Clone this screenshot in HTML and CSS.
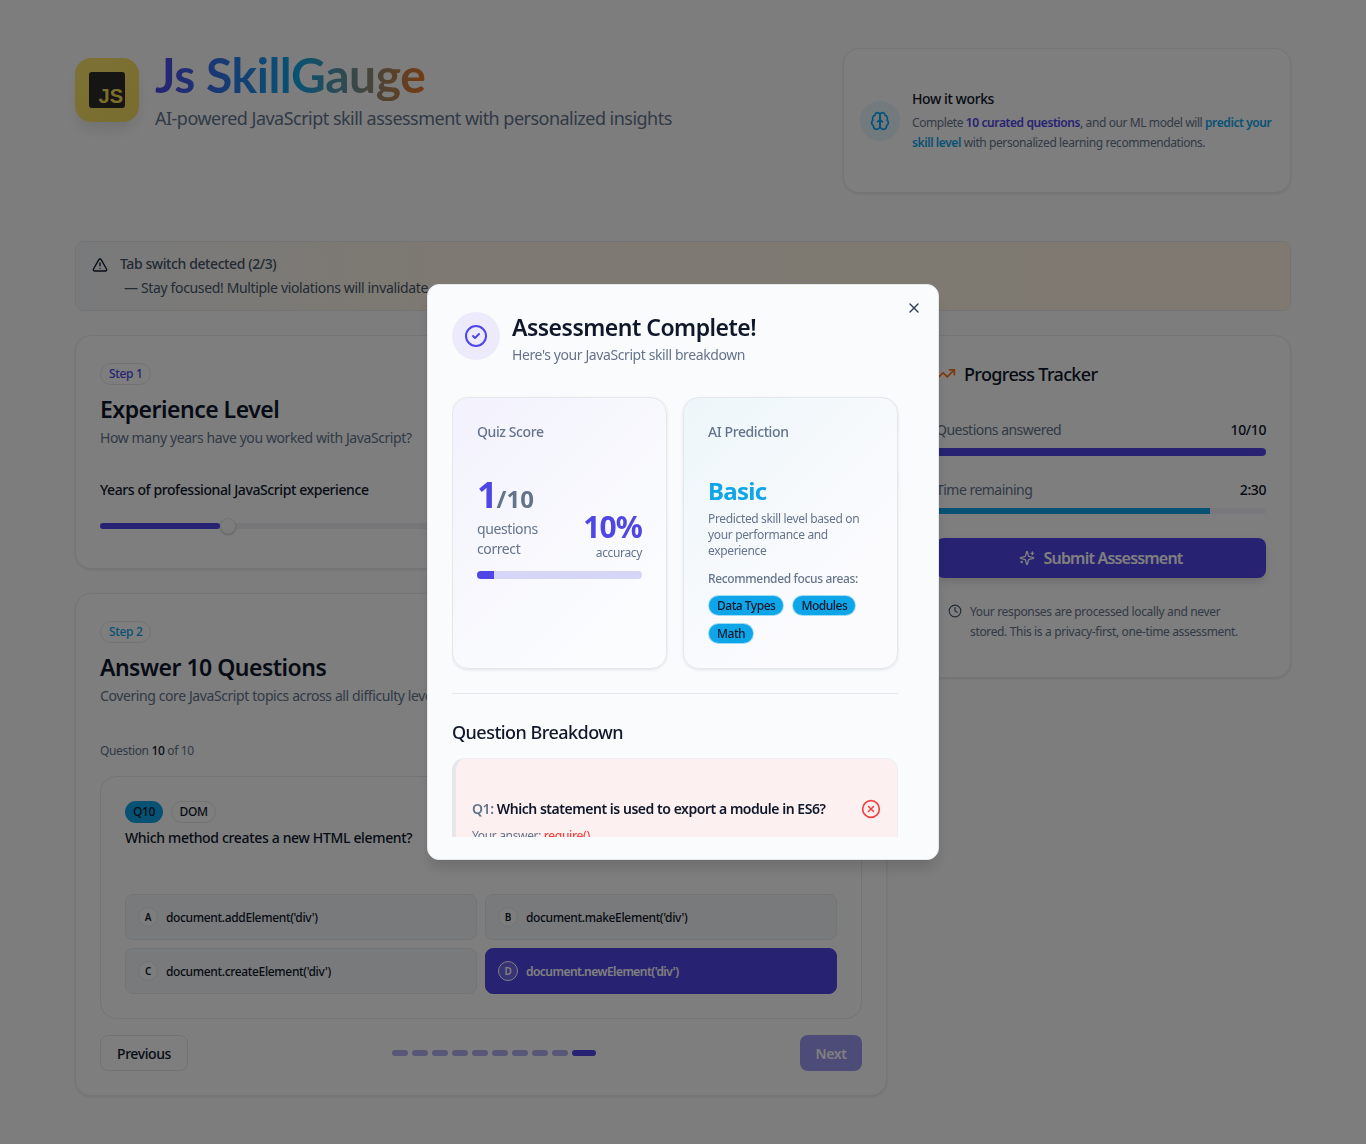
FILE: index.html
```html
<!DOCTYPE html>
<html lang="en">
<head>
<meta charset="utf-8">
<title>Js SkillGauge</title>
<link rel="stylesheet" href="styles.css">
</head>
<body>
<div class="page">
  <header class="top">
    <div class="brand">
      <div class="logo"><div class="js-box"><span>JS</span></div></div>
      <div class="brand-text">
        <h1>Js SkillGauge</h1>
        <p>AI-powered JavaScript skill assessment with personalized insights</p>
      </div>
    </div>
    <aside class="how card">
      <div class="how-icon">
        <svg class="ic" width="20" height="20" viewBox="0 0 24 24"><path d="M12 5a3 3 0 1 0-5.997.125 4 4 0 0 0-2.526 5.77 4 4 0 0 0 .556 6.588A4 4 0 1 0 12 18Z"/><path d="M12 5a3 3 0 1 1 5.997.125 4 4 0 0 1 2.526 5.77 4 4 0 0 1-.556 6.588A4 4 0 1 1 12 18Z"/><path d="M15 13a4.5 4.5 0 0 1-3-4 4.5 4.5 0 0 1-3 4"/><path d="M12 18V9"/></svg>
      </div>
      <div>
        <h3>How it works</h3>
        <p>Complete <b class="indigo">10 curated questions</b>, and our ML model will <b class="sky">predict your skill level</b> with personalized learning recommendations.</p>
      </div>
    </aside>
  </header>

  <section class="alert">
    <svg class="ic alert-ic" width="16" height="16" viewBox="0 0 24 24"><path d="m21.73 18-8-14a2 2 0 0 0-3.48 0l-8 14A2 2 0 0 0 4 21h16a2 2 0 0 0 1.73-3"/><path d="M12 9v4"/><path d="M12 17h.01"/></svg>
    <div>
      <div class="alert-title">Tab switch detected (2/3)</div>
      <div class="alert-body">— Stay focused! Multiple violations will invalidate</div>
    </div>
  </section>

  <main class="grid">
    <div class="left">
      <section class="card step-card step-one">
        <span class="step indigo">Step 1</span>
        <h2>Experience Level</h2>
        <p class="muted">How many years have you worked with JavaScript?</p>
        <div class="field-label">Years of professional JavaScript experience</div>
        <div class="slider"><div class="slider-fill"></div><div class="slider-thumb"></div></div>
      </section>

      <section class="card step-card step-two">
        <span class="step sky">Step 2</span>
        <h2>Answer 10 Questions</h2>
        <p class="muted">Covering core JavaScript topics across all difficulty levels</p>
        <div class="q-count">Question <b>10</b> of 10</div>
        <div class="q-card">
          <div class="q-tags"><span class="q-num">Q10</span><span class="q-topic">DOM</span></div>
          <div class="q-text">Which method creates a new HTML element?</div>
          <div class="options">
            <div class="option"><span class="letter">A</span>document.addElement('div')</div>
            <div class="option"><span class="letter">B</span>document.makeElement('div')</div>
            <div class="option"><span class="letter">C</span>document.createElement('div')</div>
            <div class="option selected"><span class="letter">D</span>document.newElement('div')</div>
          </div>
        </div>
        <div class="q-nav">
          <button class="btn-prev">Previous</button>
          <div class="dots"><i></i><i></i><i></i><i></i><i></i><i></i><i></i><i></i><i></i><i class="now"></i></div>
          <button class="btn-next">Next</button>
        </div>
      </section>
    </div>

    <aside class="card tracker">
      <h3 class="tracker-title">
        <svg class="ic orange" width="20" height="20" viewBox="0 0 24 24"><polyline points="22 7 13.5 15.5 8.5 10.5 2 17"/><polyline points="16 7 22 7 22 13"/></svg>
        Progress Tracker
      </h3>
      <div class="metric metric-q"><span>Questions answered</span><b>10/10</b></div>
      <div class="bar bar-q"><div class="bar-fill-q"></div></div>
      <div class="metric metric-t"><span>Time remaining</span><b>2:30</b></div>
      <div class="bar bar-t"><div class="bar-fill-t"></div></div>
      <button class="submit">
        <svg class="ic" width="16" height="16" viewBox="0 0 24 24"><path d="M9.937 15.5A2 2 0 0 0 8.5 14.063l-6.135-1.582a.5.5 0 0 1 0-.962L8.5 9.936A2 2 0 0 0 9.937 8.5l1.582-6.135a.5.5 0 0 1 .963 0L14.063 8.5A2 2 0 0 0 15.5 9.937l6.135 1.581a.5.5 0 0 1 0 .964L15.5 14.063a2 2 0 0 0-1.437 1.437l-1.582 6.135a.5.5 0 0 1-.963 0z"/><path d="M20 3v4"/><path d="M22 5h-4"/><path d="M4 17v2"/><path d="M5 18H3"/></svg>
        Submit Assessment
      </button>
      <div class="note">
        <svg class="ic" width="14" height="14" viewBox="0 0 24 24"><circle cx="12" cy="12" r="10"/><polyline points="12 6 12 12 16 14"/></svg>
        <p>Your responses are processed locally and never stored. This is a privacy-first, one-time assessment.</p>
      </div>
    </aside>
  </main>
</div>

<div class="overlay">
  <div class="modal">
    <button class="close" aria-label="Close">
      <svg class="ic" width="16" height="16" viewBox="0 0 24 24"><path d="M18 6 6 18"/><path d="m6 6 12 12"/></svg>
    </button>
    <div class="modal-scroll">
      <div class="m-head">
        <div class="m-icon">
          <svg class="ic" width="24" height="24" viewBox="0 0 24 24"><circle cx="12" cy="12" r="10"/><path d="m9 12 2 2 4-4"/></svg>
        </div>
        <div>
          <h2>Assessment Complete!</h2>
          <p>Here's your JavaScript skill breakdown</p>
        </div>
      </div>
      <div class="m-cards">
        <div class="m-card score-card">
          <div class="m-label">Quiz Score</div>
          <div class="score-row">
            <div>
              <div class="score"><span class="score-n">1</span><span class="score-d">/10</span></div>
              <div class="score-cap">questions correct</div>
            </div>
            <div class="acc">
              <div class="acc-n">10%</div>
              <div class="acc-cap">accuracy</div>
            </div>
          </div>
          <div class="score-bar"><div class="score-fill"></div></div>
        </div>
        <div class="m-card ai-card">
          <div class="m-label">AI Prediction</div>
          <div class="level">Basic</div>
          <p class="level-note">Predicted skill level based on your performance and experience</p>
          <div class="focus">Recommended focus areas:</div>
          <div class="chips"><span>Data Types</span><span>Modules</span><span>Math</span></div>
        </div>
      </div>
      <hr class="m-rule">
      <h3 class="m-sub">Question Breakdown</h3>
      <div class="review">
        <div class="review-row">
          <div class="review-q"><span>Q1:</span> Which statement is used to export a module in ES6?</div>
          <svg class="ic red" width="20" height="20" viewBox="0 0 24 24"><circle cx="12" cy="12" r="10"/><path d="m15 9-6 6"/><path d="m9 9 6 6"/></svg>
        </div>
        <div class="review-a">Your answer: <b>require()</b></div>
      </div>
    </div>
  </div>
</div>
</body>
</html>
```

FILE: styles.css
```css
* { box-sizing: border-box; letter-spacing: -0.029em; }
html, body { margin: 0; padding: 0; }
body {
  background: #fbfbfd;
  color: #0f172a;
  font-family: "Noto Sans", "Open Sans", "Liberation Sans", sans-serif;
  font-size: 14px;
}
h1, h2, h3, p { margin: 0; }
b { font-weight: 600; }
button { font-family: inherit; }
.ic { fill: none; stroke: currentColor; stroke-width: 2; stroke-linecap: round; stroke-linejoin: round; flex: none; display: block; }
.indigo { color: #4f46e5; }
.sky { color: #0ea5e9; }
.orange { color: #f97316; }
.red { color: #ef4444; }

.page { width: 1216px; margin: 0 auto; padding: 48px 0; height: 1144px; }
.card {
  background: #fcfcfd;
  border: 1px solid #eaebef;
  border-radius: 16px;
  box-shadow: 0 1px 3px rgba(0,0,0,.1);
}

.top { display: flex; justify-content: space-between; align-items: flex-start; height: 145px; margin-bottom: 48px; }
.brand { display: flex; gap: 16px; padding-top: 10px; }
.logo {
  width: 64px; height: 64px; border-radius: 16px;
  background: linear-gradient(135deg, #f9e36a, #f4d85e);
  box-shadow: 0 10px 15px -3px rgba(0,0,0,.1);
  display: flex; align-items: center; justify-content: center;
}
.js-box { width: 36px; height: 36px; background: #2b2b26; border-radius: 3px; display: flex; align-items: flex-end; justify-content: flex-end; padding: 0 2px 1px 0; }
.js-box span { color: #f7df5a; font-family: "Liberation Sans", sans-serif; font-weight: 700; font-size: 20px; line-height: 22px; letter-spacing: 0; }
.brand-text { margin-top: -9px; }
h1 {
  font-family: "Lato", "Noto Sans", sans-serif;
  font-size: 48px; line-height: 52px; font-weight: 700; letter-spacing: -0.01em;
  background: linear-gradient(90deg, #4f46e5 0%, #0ea5e9 50%, #f97316 100%);
  background-clip: text; -webkit-background-clip: text; color: transparent;
  width: 280px; white-space: nowrap;
}
.brand-text p { font-size: 18px; line-height: 28px; color: #64748b; margin-top: 3px; }

.how { width: 448px; height: 145px; display: flex; gap: 12px; align-items: center; padding: 0 12px 0 16px; }
.how-icon { width: 40px; height: 40px; border-radius: 50%; background: #e7f4fb; color: #0ea5e9; display: flex; align-items: center; justify-content: center; flex: none; }
.how h3 { font-size: 14px; font-weight: 500; line-height: 20px; margin-bottom: 4px; }
.how p, .how b { font-size: 12px; line-height: 20px; color: #64748b; letter-spacing: -0.034em; }
.how b.indigo { color: #4f46e5; }
.how b.sky { color: #0ea5e9; }

.alert {
  height: 70px; margin-bottom: 24px; padding: 11px 16px;
  display: flex; gap: 12px;
  background: linear-gradient(90deg, #f3f5f8, #fcf3e4 30%, #fef3e2);
  border: 1px solid #e8e8ea; border-radius: 8px;
}
.alert-ic { margin-top: 4px; }
.alert-title { font-weight: 500; color: #475569; line-height: 22px; }
.alert-body { color: #475569; line-height: 22px; margin-top: 2px; padding-left: 4px; letter-spacing: -0.025em; }

.grid { display: grid; grid-template-columns: 812px 380px; gap: 24px; align-items: start; }
.left { display: flex; flex-direction: column; gap: 24px; }
.step-card { padding: 24px; }
.step-one { height: 234px; }
.step-two { height: 503px; }
.step {
  display: inline-block; font-size: 12px; line-height: 20px; font-weight: 500;
  padding: 0 8px; border: 1px solid #e6e7eb; border-radius: 999px; margin-top: 3px;
}
h2 { font-size: 23px; line-height: 32px; font-weight: 600; letter-spacing: -0.022em; }
.step-card h2 { margin-top: 8px; }
.muted { color: #64748b; line-height: 20px; margin-top: 3px; }
.field-label { font-weight: 500; line-height: 20px; margin-top: 32px; }
.slider { position: relative; height: 6px; background: #eeeff3; border-radius: 3px; margin-top: 23px; }
.slider-fill { width: 120px; height: 6px; background: #4f46e5; border-radius: 3px; }
.slider-thumb { position: absolute; left: 120px; top: -5px; width: 16px; height: 16px; border-radius: 50%; background: #fbfbfb; border: 1px solid #e5e7eb; box-shadow: 0 1px 2px rgba(0,0,0,.2); }

.step-two .q-count { font-size: 12px; line-height: 16px; color: #64748b; margin-top: 37px; }
.q-count b { color: #0f172a; font-weight: 500; }
.q-card { height: 243px; margin-top: 17px; padding: 24px; border: 1px solid #e8e9ed; border-radius: 16px; background: #fcfcfd; }
.q-tags { display: flex; gap: 8px; }
.q-num { background: #0ea5e9; color: #0f172a; font-size: 12px; font-weight: 500; line-height: 20px; padding: 0 7px; border-radius: 999px; border: 1px solid transparent; }
.q-topic { color: #0f172a; font-size: 12px; font-weight: 500; line-height: 20px; padding: 0 7.5px; border-radius: 999px; border: 1px solid #e6e7eb; }
.q-text { font-weight: 500; line-height: 20px; margin-top: 5px; letter-spacing: -0.024em; }
.options { display: grid; grid-template-columns: 352px 352px; gap: 8px; margin-top: 46px; }
.option {
  height: 46px; display: flex; align-items: center; gap: 8px;
  font-size: 12px; font-weight: 500; padding: 0 12px;
  background: #f3f5f6; border: 1px solid #e6e8ec; border-radius: 8px;
}
.letter { width: 20px; height: 20px; border: 1px solid #e6e7eb; border-radius: 50%; background: #fbfbfc; display: flex; align-items: center; justify-content: center; font-size: 10px; font-weight: 600; flex: none; }
.selected { background: #4f46e5; border-color: #4f46e5; color: #fff; font-weight: 600; letter-spacing: -0.045em; }
.selected .letter { background: #6e67e9; border-color: #fff; color: #fff; }

.q-nav { display: flex; justify-content: space-between; align-items: center; margin-top: 16px; }
.btn-prev { width: 88px; height: 36px; font-size: 14px; font-weight: 500; color: #0f172a; background: #fcfcfd; border: 1px solid #e6e7eb; border-radius: 8px; }
.btn-next { width: 62px; height: 36px; font-size: 14px; font-weight: 600; color: #fff; background: #9b97ee; border: 0; border-radius: 8px; }
.dots { display: flex; gap: 4px; }
.dots i { width: 16px; height: 6px; border-radius: 3px; background: #b1aef0; }
.dots .now { width: 24px; background: #4f46e5; }

.tracker { height: 343px; padding: 24px; }
.tracker-title { display: flex; align-items: center; gap: 8px; font-size: 18px; font-weight: 500; line-height: 28px; margin-top: 0; letter-spacing: -0.036em; }
.metric { display: flex; justify-content: space-between; line-height: 20px; color: #64748b; }
.metric span { letter-spacing: -0.037em; }
.metric b { color: #0f172a; font-weight: 500; }
.metric-q { margin-top: 32px; }
.metric-t { margin-top: 24px; }
.bar { border-radius: 4px; background: #eceafb; overflow: hidden; margin-top: 8px; }
.bar-q { height: 8px; }
.bar-t { height: 6px; background: #f2f1fa; }
.bar-fill-q { height: 8px; width: 100%; background: #4f46e5; }
.bar-fill-t { height: 6px; width: 83%; background: #0ea5e9; }
.submit {
  width: 100%; height: 40px; margin-top: 24px; border: 0; border-radius: 8px;
  background: #4f46e5; color: #fff; font-size: 16px; font-weight: 600;
  display: flex; align-items: center; justify-content: center; gap: 8px;
  box-shadow: 0 4px 8px rgba(0,0,0,.12);
  letter-spacing: -0.05em;
}
.note { display: flex; gap: 8px; margin-top: 24px; padding: 0 12px; font-size: 12px; line-height: 20px; color: #64748b; }
.note .ic { margin-top: 2px; color: #475569; }

.overlay { position: fixed; inset: 0; background: rgba(0,0,0,.5); display: flex; align-items: center; justify-content: center; }
.modal {
  position: relative; width: 512px; height: 576px;
  padding: 24px 24px 22px;
  background: #fafbfd; border: 1px solid #e5e7eb; border-radius: 12px;
  box-shadow: 0 10px 15px -3px rgba(0,0,0,.15);
}
.close { position: absolute; top: 15px; right: 16px; width: 16px; height: 16px; padding: 0; border: 0; background: none; color: #334155; }
.modal-scroll { height: 100%; overflow: hidden; padding: 3px 16px 0 0; }
.m-head { display: flex; gap: 12px; align-items: flex-start; }
.m-icon { width: 48px; height: 48px; border-radius: 50%; background: #eceafb; color: #4f46e5; display: flex; align-items: center; justify-content: center; flex: none; }
.m-head h2 { margin-top: -1px; }
.m-head p { color: #64748b; line-height: 20px; margin-top: 2px; }
.m-cards { display: grid; grid-template-columns: 215px 215px; gap: 16px; margin-top: 32px; }
.m-card { padding: 24px; border: 1px solid #e5e7eb; border-radius: 16px; box-shadow: 0 1px 3px rgba(0,0,0,.1); height: 272px; }
.score-card { background: linear-gradient(135deg, #f3f2fd, #fbfcfe 80%); }
.ai-card { background: linear-gradient(135deg, #edf6fa, #fbfbfe 70%); }
.m-label { font-weight: 500; color: #64748b; line-height: 20px; }
.score-row { display: flex; justify-content: space-between; align-items: flex-end; margin-top: 36px; }
.score { line-height: 33px; white-space: nowrap; }
.score-n { font-size: 36px; font-weight: 700; color: #4f46e5; }
.score-d { font-size: 24px; font-weight: 700; color: #64748b; letter-spacing: 0; }
.score-cap { color: #64748b; line-height: 20px; width: 80px; }
.acc { text-align: right; margin-bottom: -2px; }
.acc-n { font-size: 30px; line-height: 36px; font-weight: 700; color: #4f46e5; }
.acc-cap { font-size: 12px; line-height: 16px; color: #64748b; }
.score-bar { height: 8px; border-radius: 4px; background: #d6d4f7; overflow: hidden; margin-top: 12px; }
.score-fill { width: 10%; height: 8px; background: #4f46e5; }
.level { font-size: 24px; line-height: 32px; font-weight: 700; color: #0ea5e9; margin-top: 33px; }
.level-note { font-size: 12px; line-height: 16px; color: #64748b; margin-top: 4px; }
.focus { font-size: 12px; line-height: 16px; font-weight: 500; color: #64748b; margin-top: 12px; }
.chips { display: flex; flex-wrap: wrap; gap: 7px 8px; margin-top: 8px; }
.chips span { background: #0ea5e9; color: #0f172a; font-size: 12px; font-weight: 500; line-height: 19px; padding: 0 8px; border: 1px solid rgba(255,255,255,.6); border-radius: 999px; letter-spacing: -0.04em; }
.m-rule { border: 0; border-top: 1px solid #e5e7eb; margin: 24px 0 0; }
.m-sub { font-size: 18px; font-weight: 500; line-height: 28px; margin-top: 24px; }
.review { margin-top: 12px; height: 120px; background: #fcf0f0; border: 1px solid #eeeef2; border-left: 4px solid #e5e7eb; border-radius: 12px; padding: 40px 16px 0; }
.review-row { display: flex; justify-content: space-between; align-items: center; }
.review-q { font-weight: 600; line-height: 20px; letter-spacing: -0.033em; }
.review-q span { color: #64748b; }
.review-a { font-size: 12px; line-height: 16px; color: #64748b; margin-top: 9px; }
.review-a b { color: #ef4444; font-weight: 500; }
```
